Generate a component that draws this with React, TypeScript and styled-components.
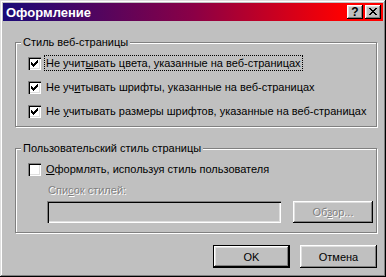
import React from 'react';
import styled, { createGlobalStyle } from 'styled-components';

const GlobalStyle = createGlobalStyle`
    html, body {
        margin: 0;
        padding: 0;
        background: #c0c0c0;
    }
    body {
        font-family: "Liberation Sans", Arial, sans-serif;
        font-size: 11px;
        color: #000;
    }
`

const Window = styled.div`
    width: 386px;
    height: 277px;
    box-sizing: border-box;
    padding: 3px;
    background: #c0c0c0;
    display: flex;
    flex-direction: column;
    box-shadow: inset -1px -1px #000, inset 1px 1px #dfdfdf,
        inset -2px -2px #808080, inset 2px 2px #fff;
`

const TitleBar = styled.div`
    height: 18px;
    display: flex;
    align-items: center;
    padding: 0 2px 0 3px;
    background: linear-gradient(to right, #1a0a78 0%, #8a0046 50%, #ff0000 90%);
    color: #fff;
`

const Title = styled.div`
    font-weight: bold;
    font-size: 13px;
    flex: 1;
`

const CaptionButtons = styled.div`
    display: flex;
    gap: 2px;
`

const CaptionButton = styled.div`
    width: 16px;
    height: 14px;
    box-sizing: border-box;
    background: #c0c0c0;
    color: #000;
    display: flex;
    align-items: center;
    justify-content: center;
    font-weight: bold;
    font-size: 12px;
    line-height: 1;
    box-shadow: inset -1px -1px #000, inset 1px 1px #fff,
        inset -2px -2px #808080, inset 2px 2px #dfdfdf;
    svg {
        display: block;
        margin: 0 0 1px 0;
    }
`

const Content = styled.div`
    flex: 1;
    display: flex;
    flex-direction: column;
    padding: 21px 6px 6px 12px;
`

const Group = styled.div<{ $pad: string; $top?: number }>`
    position: relative;
    border: 1px solid #808080;
    box-shadow: 1px 1px 0 #fff, inset 1px 1px 0 #fff;
    padding: ${p => p.$pad};
    margin-top: ${p => p.$top || 0}px;
    display: flex;
    flex-direction: column;
`

const Legend = styled.div`
    position: absolute;
    top: -8px;
    left: 5px;
    line-height: 14px;
    padding: 0 2px;
    background: #c0c0c0;
`

const Rows = styled.div`
    display: flex;
    flex-direction: column;
    gap: 8px;
`

const Row = styled.div`
    height: 16px;
    display: flex;
    align-items: center;
`

const Box = styled.div`
    width: 13px;
    height: 13px;
    box-sizing: border-box;
    background: #fff;
    flex-shrink: 0;
    padding: 3px;
    box-shadow: inset 1px 1px #808080, inset 2px 2px #000,
        inset -1px -1px #fff, inset -2px -2px #dfdfdf;
    svg {
        display: block;
    }
`

const Label = styled.span<{ $focus?: boolean }>`
    margin-left: 3px;
    padding: 0 1px;
    line-height: 14px;
    white-space: nowrap;
    border: 1px dotted ${p => (p.$focus ? '#000' : 'transparent')};
`

const U = styled.span`
    text-decoration: underline;
    text-underline-offset: 1px;
`

const Disabled = styled.span`
    color: #808080;
    text-shadow: 1px 1px 0 #fff;
`

const SubLabel = styled.div`
    margin: 6px 0 0 20px;
    line-height: 14px;
`

const InputRow = styled.div`
    display: flex;
    gap: 12px;
    margin: 4px 0 0 19px;
`

const TextBox = styled.div`
    width: 234px;
    height: 22px;
    box-sizing: border-box;
    background: #c0c0c0;
    flex-shrink: 0;
    box-shadow: inset 1px 1px #808080, inset 2px 2px #000,
        inset -1px -1px #fff, inset -2px -2px #dfdfdf;
`

const Button = styled.div<{ $w: number; $h: number; $default?: boolean }>`
    width: ${p => p.$w}px;
    height: ${p => p.$h}px;
    box-sizing: border-box;
    flex-shrink: 0;
    display: flex;
    align-items: center;
    justify-content: center;
    background: #c0c0c0;
    border: 1px solid ${p => (p.$default ? '#000' : 'transparent')};
    box-shadow: inset -1px -1px #000, inset 1px 1px #fff,
        inset -2px -2px #808080, inset 2px 2px #dfdfdf;
`

const BareButton = styled(Button)`
    border: none;
`

const ButtonBar = styled.div`
    display: flex;
    justify-content: flex-end;
    gap: 10px;
    margin-top: 12px;
`

const CHECK = [2, 3, 4, 3, 2, 1, 0];

const CheckMark = () => (
    <svg width="7" height="7" viewBox="0 0 7 7" shapeRendering="crispEdges">
        {CHECK.map((y, x) => (
            <rect key={x} x={x} y={y} width="1" height="3" fill="#000" />
        ))}
    </svg>
)

const CROSS = [[0, 6], [1, 5], [2, 4], [3, 3], [2, 4], [1, 5], [0, 6]];

const CloseGlyph = () => (
    <svg width="8" height="7" viewBox="0 0 8 7" shapeRendering="crispEdges">
        {CROSS.map(([a, b], y) => (
            <React.Fragment key={y}>
                <rect x={a} y={y} width="2" height="1" fill="#000" />
                <rect x={b} y={y} width="2" height="1" fill="#000" />
            </React.Fragment>
        ))}
    </svg>
)

const Check = ({ checked, children, focus }: { checked: boolean; children: React.ReactNode; focus?: boolean }) => (
    <Row>
        <Box>{checked && <CheckMark />}</Box>
        <Label $focus={focus}>{children}</Label>
    </Row>
)

export default function App() {
    return <>
        <GlobalStyle />
        <Window>
            <TitleBar>
                <Title>Оформление</Title>
                <CaptionButtons>
                    <CaptionButton>?</CaptionButton>
                    <CaptionButton><CloseGlyph /></CaptionButton>
                </CaptionButtons>
            </TitleBar>
            <Content>
                <Group $pad="12px 6px 7px 12px">
                    <Legend>Стиль веб-страницы</Legend>
                    <Rows>
                        <Check checked focus>Не учит<U>ы</U>вать цвета, указанные на веб-страницах</Check>
                        <Check checked>Не уч<U>и</U>тывать шрифты, указанные на веб-страницах</Check>
                        <Check checked>Не <U>у</U>читывать размеры шрифтов, указанные на веб-страницах</Check>
                    </Rows>
                </Group>
                <Group $pad="12px 1px 9px 12px" $top={21}>
                    <Legend>Пользовательский стиль страницы</Legend>
                    <Check checked={false}><U>О</U>формлять, используя стиль пользователя</Check>
                    <SubLabel><Disabled>Спи<U>с</U>ок стилей:</Disabled></SubLabel>
                    <InputRow>
                        <TextBox />
                        <BareButton $w={80} $h={22}><Disabled>Об<U>з</U>ор...</Disabled></BareButton>
                    </InputRow>
                </Group>
                <ButtonBar>
                    <Button $w={77} $h={23} $default>OK</Button>
                    <BareButton $w={77} $h={23}>Отмена</BareButton>
                </ButtonBar>
            </Content>
        </Window>
    </>
}
